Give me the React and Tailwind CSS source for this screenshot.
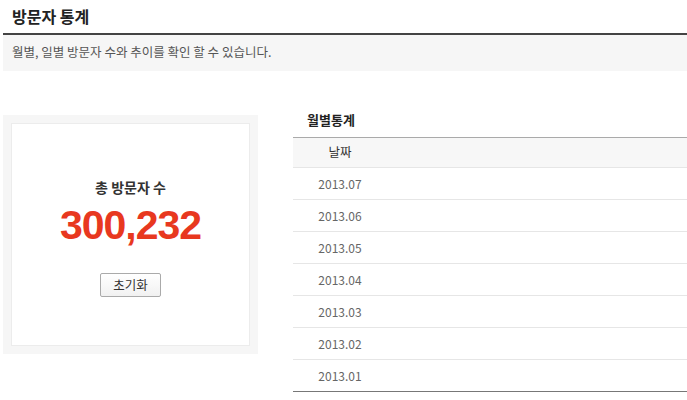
import React from 'react';

const months = ['2013.07', '2013.06', '2013.05', '2013.04', '2013.03', '2013.02', '2013.01'];

const VisitorStats = () => {
  return (
    <div className="w-[687px] h-[400px] bg-white overflow-hidden font-['Noto_Sans_CJK_KR',sans-serif] text-[#333]">
      <div className="pl-[3px]">
        <h2 className="h-[33px] pl-[9px] pt-[5px] text-[16px] leading-[22px] font-bold text-[#222]">방문자 통계</h2>
        <div className="border-t-2 border-[#444] bg-[#f6f6f6] h-[38px] pl-[9px] pt-[8px] text-[12.5px] leading-[18px] text-[#555]">
          월별, 일별 방문자 수와 추이를 확인 할 수 있습니다.
        </div>
      </div>

      <div className="flex mt-[44px] pl-[3px]">
        <div className="w-[255px] h-[239px] bg-[#f6f6f6] p-[8px]">
          <div className="h-full bg-white border border-[#ececec] flex flex-col items-center pt-[53px]">
            <p className="text-[14px] leading-[20px] font-bold text-[#333]">총 방문자 수</p>
            <p className="mt-[8px] font-['Liberation_Sans',Arial,sans-serif] text-[41px] leading-[40px] font-bold text-[#e8381f] tracking-[-1px]">
              300,232
            </p>
            <button className="mt-[28px] w-[61px] h-[24px] border border-[#aaa] rounded-[2px] bg-gradient-to-b from-white to-[#f1f1f1] text-[12.5px] leading-[18px] text-[#333]">
              초기화
            </button>
          </div>
        </div>

        <div className="ml-[35px] flex-1 -mt-[4px]">
          <h3 className="pl-[14px] h-[26px] text-[13px] leading-[18px] font-bold text-[#222]">월별통계</h3>
          <table className="w-full border-collapse">
            <thead>
              <tr className="border-t border-[#aaa] bg-[#f7f7f7]">
                <th className="w-[94px] h-[30px] text-center text-[12.5px] font-normal text-[#333]">날짜</th>
                <th></th>
              </tr>
            </thead>
            <tbody>
              {months.map((m, i) => (
                <tr
                  key={m}
                  className={i === months.length - 1 ? 'border-t border-[#e6e6e6] border-b border-b-[#777]' : 'border-t border-[#e6e6e6]'}
                >
                  <td className="h-[32px] text-center text-[12px] text-[#666]">{m}</td>
                  <td></td>
                </tr>
              ))}
            </tbody>
          </table>
        </div>
      </div>
    </div>
  );
};

export default function App() {
  return <VisitorStats />;
}
